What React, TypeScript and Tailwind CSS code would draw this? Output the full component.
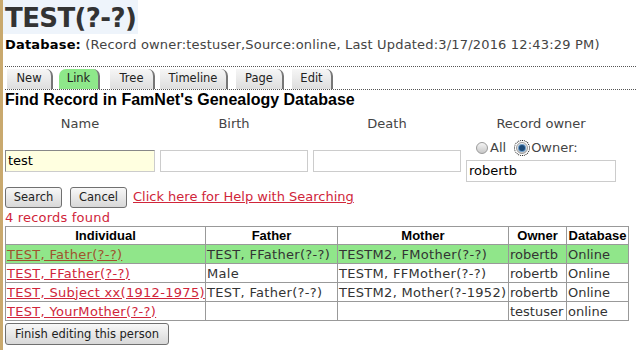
const tabs = [
  { label: "New", cls: "w-[46px] ml-[2px]" },
  { label: "Link", cls: "w-[41px] ml-[6px]" },
  { label: "Tree", cls: "w-[45px] ml-[10px]" },
  { label: "Timeline", cls: "w-[68px] ml-[5px]" },
  { label: "Page", cls: "w-[48px] ml-[8px]" },
  { label: "Edit", cls: "w-[41px] ml-[8px]" },
];

const rows = [
  { ind: "TEST, Father(?-?)", father: "TEST, FFather(?-?)", mother: "TESTM2, FMother(?-?)", owner: "robertb", db: "Online", hl: true },
  { ind: "TEST, FFather(?-?)", father: "Male", mother: "TESTM, FFMother(?-?)", owner: "robertb", db: "Online" },
  { ind: "TEST, Subject xx(1912-1975)", father: "TEST, Father(?-?)", mother: "TESTM2, Mother(?-1952)", owner: "robertb", db: "Online" },
  { ind: "TEST, YourMother(?-?)", father: "", mother: "", owner: "testuser", db: "online" },
];

function Radio({ checked }: { checked?: boolean }) {
  return (
    <span className={`inline-block w-[12px] h-[12px] rounded-full border border-[#9a9a9a] bg-gradient-to-b from-[#f4f4f4] to-[#c8c8c8] relative ${checked ? "outline outline-1 outline-dotted outline-black outline-offset-1" : ""}`}>
      {checked && <span className="absolute left-[2px] top-[2px] w-[6px] h-[6px] rounded-full bg-[#1c4a78] ring-1 ring-[#6d9cc8]" />}
    </span>
  );
}

const btn = "h-[21px] border border-[#707070] rounded-[3px] bg-gradient-to-b from-[#f8f8f8] to-[#d8d8d8] text-[11.5px] text-[#222] leading-[19px] text-center";

export default function App() {
  return (
    <div className="w-[636px] h-[350px] bg-white flex overflow-hidden font-['DejaVu_Sans',Verdana,sans-serif] text-[13px]">
      <div className="w-[3px] bg-[#c9a96e] shrink-0" />
      <div className="flex-1 pl-[2px]">
        <div className="inline-block bg-[#eef4fb] pr-[2px] h-[34px] -ml-[2px] pl-[2px]">
          <span className="text-[26px] font-bold text-[#333] leading-[36px] tracking-[-0.6px]">TEST(?-?)</span>
        </div>
        <div className="mt-[3px] leading-[16px] text-[#444] tracking-[0.18px]">
          <span className="font-bold text-black">Database:</span> (Record owner:testuser,Source:online, Last Updated:3/17/2016 12:43:29 PM)
        </div>

        <div className="mt-[13px] border-t border-b border-dotted border-[#555] h-[24px] flex items-end">
          {tabs.map((t) => (
            <div
              key={t.label}
              className={`${t.cls} h-[20px] flex items-center justify-center rounded-tr-[7px] border-r-2 border-[#777] text-[11.5px] text-[#222] ${t.label === "Link" ? "bg-[#8ee88a] rounded-tl-[7px]" : "bg-gradient-to-b from-[#f6f6f6] to-[#dedede]"}`}
            >
              {t.label}
            </div>
          ))}
        </div>

        <div className="font-['Liberation_Sans',Arial,sans-serif] font-bold text-[16px] leading-[18px] mt-[1px]">
          Find Record in FamNet's Genealogy Database
        </div>

        <div className="flex mt-[7px] text-[#444] leading-[16px]">
          <div className="w-[150px] text-center">Name</div>
          <div className="w-[148px] ml-[5px] text-center">Birth</div>
          <div className="w-[148px] ml-[5px] text-center">Death</div>
          <div className="w-[150px] ml-[5px] text-center">Record owner</div>
        </div>

        <div className="flex mt-[7px]">
          <div className="pt-[11px]">
            <div className="w-[150px] h-[22px] bg-[#ffffe0] border border-[#ccc] border-t-[#888] border-l-[#888] px-[2px] leading-[20px] text-black">test</div>
          </div>
          <div className="pt-[11px] ml-[5px]">
            <div className="w-[148px] h-[22px] bg-white border border-[#ccc]" />
          </div>
          <div className="pt-[11px] ml-[5px]">
            <div className="w-[148px] h-[22px] bg-white border border-[#ccc]" />
          </div>
          <div className="ml-[5px]">
            <div className="flex items-center h-[18px] pl-[10px] text-[#444]">
              <Radio />
              <span className="ml-[2px]">All</span>
              <span className="ml-[10px] flex items-center"><Radio checked /></span>
              <span className="ml-[3px]">Owner:</span>
            </div>
            <div className="mt-[3px] w-[150px] h-[22px] border border-[#ccc] px-[2px] leading-[20px] text-black">robertb</div>
          </div>
        </div>

        <div className="flex items-center mt-[4px] h-[22px]">
          <button className={`${btn} w-[57px]`}>Search</button>
          <button className={`${btn} w-[57px] ml-[8px]`}>Cancel</button>
          <span className="ml-[6px] text-[#d0253a] underline">Click here for Help with Searching</span>
        </div>

        <div className="text-[#d0253a] leading-[16px] mt-[2px] tracking-[0.2px]">4 records found</div>

        <table className="table-fixed border-collapse border border-[#888] leading-[17px] w-[623px]">
          <colgroup>
            <col className="w-[200px]" />
            <col className="w-[132px]" />
            <col className="w-[171px]" />
            <col className="w-[58px]" />
            <col className="w-[62px]" />
          </colgroup>
          <thead>
            <tr className="font-['Liberation_Sans',Arial,sans-serif] font-bold text-[13px]">
              <th className="border border-[#999] h-[18px] text-center">Individual</th>
              <th className="border border-[#999] text-center">Father</th>
              <th className="border border-[#999] text-center">Mother</th>
              <th className="border border-[#999] text-center">Owner</th>
              <th className="border border-[#999] text-center">Database</th>
            </tr>
          </thead>
          <tbody className="tracking-[0.3px]">
            {rows.map((r) => (
              <tr key={r.ind} className={r.hl ? "bg-[#90e68a]" : ""}>
                <td className={`border border-[#999] px-[1px] h-[19px] underline whitespace-nowrap overflow-hidden ${r.hl ? "text-[#a0522d]" : "text-[#d0253a]"}`}>{r.ind}</td>
                <td className="border border-[#999] px-[1px] text-[#333] whitespace-nowrap overflow-hidden">{r.father}</td>
                <td className="border border-[#999] px-[1px] text-[#333] whitespace-nowrap overflow-hidden">{r.mother}</td>
                <td className="border border-[#999] px-[1px] text-[#333] whitespace-nowrap overflow-hidden tracking-normal">{r.owner}</td>
                <td className="border border-[#999] px-[1px] text-[#333] whitespace-nowrap overflow-hidden tracking-normal">{r.db}</td>
              </tr>
            ))}
          </tbody>
        </table>

        <button className={`${btn} mt-[2px] h-[22px] w-[164px]`}>Finish editing this person</button>
      </div>
    </div>
  );
}
